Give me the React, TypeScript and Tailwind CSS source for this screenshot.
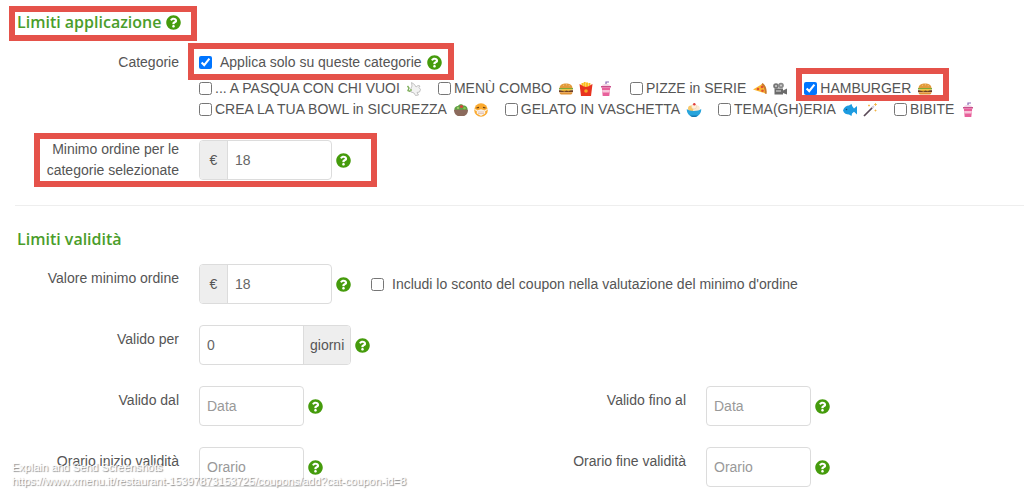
import { ReactNode, useState } from "react";
import { FaQuestionCircle } from "react-icons/fa";

type IconProps = { children: ReactNode; label: string };
const Emoji: React.FC<IconProps> = ({ children, label }) => (
  <svg
    viewBox="0 0 16 16"
    role="img"
    aria-label={label}
    className="w-4 h-4 shrink-0"
  >
    {children}
  </svg>
);

const Dove = () => (
  <Emoji label="dove">
    <path
      d="M4.5 8.5 6 5l-.5-3.500 3 2 1.500 2.500 2-1.500 2 .5-1 1.500 1.500 2-1 2.500-2.500.5 1.500 2.500-3 .5-1.500-2.500L5 11z"
      fill="#f2f2f2"
      stroke="#b5b5b5"
      strokeWidth=".8"
    />
    <path
      d="M1.500 5 3 7 2 9.500l2.500 1"
      fill="none"
      stroke="#7fae5c"
      strokeWidth="1.400"
    />
    <circle cx="5" cy="9" r="1" fill="#8dba6a" />
  </Emoji>
);

const Burger = () => (
  <Emoji label="hamburger">
    <path d="M1.500 7C2 3.500 4.500 2.500 8 2.500s6 1 6.500 4.500z" fill="#e39a3b" />
    <path d="M1 7h14v1.500H1z" fill="#7fa638" />
    <path d="M1.500 8.300h13L12 9.800 9.500 9l-2 1.200L5 9z" fill="#fbc52d" />
    <path d="M1 9.200h14v1.900H1z" fill="#6f3f25" />
    <path d="M2 9.200h11l-2.500 1-2-.6-2 .9z" fill="#fbc52d" />
    <path d="M1.500 11.200h13c0 1.800-1 2.300-2.500 2.300H4c-1.500 0-2.500-.5-2.500-2.300z" fill="#e09334" />
    <path d="M5 4.300h.8M8 3.800h.8M10.800 4.700h.8" stroke="#fbe3b0" strokeWidth=".7" />
  </Emoji>
);

const Fries = () => (
  <Emoji label="french fries">
    <path d="M3.500 2h2v5h-2zM5.700 1h2v6h-2zM8 1.500h2v5.500H8zM10.400 2h2v5h-2z" fill="#fcbf22" />
    <path d="M1.500 3C3.500 3.500 5 6 8 6s4.500-2.500 6.500-3L13 15H3z" fill="#e8331f" />
    <circle cx="8" cy="10" r="1.800" fill="#f9a825" />
  </Emoji>
);

const Shake = () => (
  <Emoji label="cup with straw">
    <path d="M8 5V1h3" fill="none" stroke="#8a6bb5" strokeWidth="1.200" />
    <path d="M4 5c0-1.500 1.500-2 4-2s4 .5 4 2z" fill="#f3d7e6" />
    <path d="M3 5h10v1.500H3z" fill="#c94f8c" />
    <path d="M3.800 6.500h8.400L11.300 15H4.700z" fill="#e8609b" />
    <path d="M4.100 9h7.800l-.3 2.500H4.400z" fill="#f8c5da" />
  </Emoji>
);

const Pizza = () => (
  <Emoji label="pizza">
    <path d="M1 8.500 11 2.500c2.500 2.500 3.500 6 3 10z" fill="#fbb934" />
    <path d="M10.500 2c3 2 4.800 6 4 11l-1.700-.5c.3-3.500-.8-6.500-3.300-9z" fill="#c97a30" />
    <circle cx="6" cy="8" r="1.300" fill="#e2502f" />
    <circle cx="10" cy="6" r="1.300" fill="#e2502f" />
    <circle cx="10.500" cy="9.700" r="1.300" fill="#e2502f" />
  </Emoji>
);

const Camera = () => (
  <Emoji label="movie camera">
    <circle cx="4" cy="5" r="2.800" fill="#777" />
    <circle cx="9" cy="4.500" r="2.800" fill="#8a8a8a" />
    <path d="M2.500 7.500h8.500v6H2.500zM11 9.500l4-2v6l-4-1.500z" fill="#6b6b6b" />
    <circle cx="4" cy="5" r="1" fill="#d0d0d0" />
    <circle cx="9" cy="4.500" r="1" fill="#d0d0d0" />
    <path d="M4 9h5v2H4z" fill="#a5a5a5" />
  </Emoji>
);

const Salad = () => (
  <Emoji label="green salad">
    <path d="M1.500 8C1 5 3.500 4 5 4c1-2 4-2.500 5.500-.5C13 3.500 15 5.500 14.500 8z" fill="#5fa046" />
    <circle cx="8.500" cy="4.500" r="1.600" fill="#d8443a" />
    <circle cx="5" cy="6" r="1.200" fill="#9ccc65" />
    <circle cx="11.500" cy="6.300" r="1.200" fill="#8bc34a" />
    <path d="M1 7.700h14c0 4-2.500 6.300-5 6.300H6c-2.500 0-5-2.300-5-6.300z" fill="#8b6a5c" />
  </Emoji>
);

const MaskFace = () => (
  <Emoji label="face with medical mask">
    <circle cx="8" cy="8" r="6.800" fill="#fbaa2f" />
    <path d="M3.500 6 6 5.300M12.500 6 10 5.300" stroke="#6b3f12" strokeWidth="1.200" />
    <path d="M1.500 7.500 4 8.500M14.500 7.500 12 8.500" stroke="#fff" strokeWidth="1" />
    <path d="M3.800 8.500 8 7.300l4.200 1.200v3L8 14l-4.200-2.500z" fill="#f6f1ec" />
    <path d="M5 10h6M5 11.500h6" stroke="#e0a98a" strokeWidth=".6" />
  </Emoji>
);

const Gelato = () => (
  <Emoji label="ice cream">
    <circle cx="5" cy="6.500" r="3" fill="#f7c86c" />
    <circle cx="10.500" cy="6.500" r="3.200" fill="#fbe9d2" />
    <circle cx="8" cy="4.500" r="2.500" fill="#fff0dc" stroke="#ecc9a3" strokeWidth=".5" />
    <circle cx="8.300" cy="2.300" r="1.200" fill="#e23b3b" />
    <path d="M.8 7c2 2.500 12 2.500 14.400 0 .3 4-2.700 8-7.200 8S.5 11 .8 7z" fill="#27a4dc" />
    <path d="M4 13.500h8c-1 1-2.500 1.500-4 1.500s-3-.5-4-1.500z" fill="#1576b0" />
  </Emoji>
);

const Fish = () => (
  <Emoji label="fish">
    <path
      d="M1 8.500C2 5 4.500 3.500 7 3.500L9.500 2l.8 2.300L12 6.500 15 4v8.500l-3-2.700-2 1.700-.5 2.500-2.500-1.500C4.500 12.500 2 11.500 1 8.500z"
      fill="#1c9be0"
    />
    <circle cx="4.500" cy="7.500" r=".8" fill="#174a73" />
  </Emoji>
);

const Wand = () => (
  <Emoji label="magic wand">
    <path d="M2 14 11 5" stroke="#5a4a57" strokeWidth="1.700" />
    <path d="M10 6l2-2" stroke="#d9d0df" strokeWidth="1.800" />
    <path d="M13.500 1v3M12 2.500h3M7 2.500v2M6 3.500h2M13.500 7.500v2M12.500 8.500h2" stroke="#f1b13c" strokeWidth=".8" />
  </Emoji>
);

const categories = [
  { id: "pasqua", name: "... A PASQUA CON CHI VUOI", icons: [Dove] },
  { id: "combo", name: "MENÙ COMBO", icons: [Burger, Fries, Shake] },
  { id: "pizze", name: "PIZZE in SERIE", icons: [Pizza, Camera] },
  { id: "hamburger", name: "HAMBURGER", icons: [Burger], marked: true },
  { id: "bowl", name: "CREA LA TUA BOWL in SICUREZZA", icons: [Salad, MaskFace] },
  { id: "gelato", name: "GELATO IN VASCHETTA", icons: [Gelato] },
  { id: "tema", name: "TEMA(GH)ERIA", icons: [Fish, Wand] },
  { id: "bibite", name: "BIBITE", icons: [Shake] },
];

// red frame drawn over the part that is being explained
const Frame = ({ className }: { className: string }) => (
  <span
    className={`absolute border-[6px] border-[#e5524a] pointer-events-none ${className}`}
  />
);

const Help = () => (
  <button type="button" aria-label="Aiuto" className="shrink-0 text-[#459b0c]">
    <FaQuestionCircle size={15} />
  </button>
);

type FieldProps = {
  id: string;
  label: string;
  value?: string;
  placeholder?: string;
  prefix?: string;
  suffix?: string;
  center?: boolean;
  children?: ReactNode;
};
const Field: React.FC<FieldProps> = ({
  id,
  label,
  value,
  placeholder,
  prefix,
  suffix,
  center,
  children,
}) => {
  return (
    <div className={`flex gap-5 ${center ? "items-center" : "items-start"}`}>
      <label
        htmlFor={id}
        className={`w-[169px] shrink-0 text-right ${center ? "pl-7" : "pt-1"}`}
      >
        {label}
      </label>
      <div className="flex items-center gap-1">
        <div className="flex h-10 rounded border border-[#dcdcdc] overflow-hidden">
          {prefix && (
            <span className="w-7 flex items-center justify-center bg-[#eee] border-r border-[#dcdcdc]">
              {prefix}
            </span>
          )}
          <input
            id={id}
            type="text"
            defaultValue={value}
            placeholder={placeholder}
            className="w-[103px] px-[7px] text-[#666] placeholder:text-[#999] outline-none"
          />
          {suffix && (
            <span className="px-[6px] flex items-center bg-[#eee] border-l border-[#dcdcdc]">
              {suffix}
            </span>
          )}
        </div>
        <Help />
        {children}
      </div>
    </div>
  );
};

const heading =
  "font-['Open_Sans',sans-serif] text-base leading-6 font-semibold text-[#4a9d2a]";

const App: React.FC = () => {
  const [selected, setSelected] = useState<string[]>(["hamburger"]);

  const toggle = (id: string) => {
    setSelected((prev) =>
      prev.includes(id) ? prev.filter((el) => el !== id) : [...prev, id]
    );
  };

  return (
    <main className="relative bg-white pl-[10px] pt-[10px] pb-[13px] font-['Liberation_Sans',Arial,sans-serif] text-sm leading-[21px] text-[#555]">
      <div className="relative w-fit ml-[7px] flex items-center gap-[5px]">
        <h2 className={heading}>Limiti applicazione</h2>
        <Help />
        <Frame className="-left-2 -right-4 -top-1 -bottom-[7px]" />
      </div>

      <div className="flex gap-5 mt-[18px]">
        <span className="w-[169px] shrink-0 text-right">Categorie</span>
        <div>
          <div className="relative w-fit flex items-center gap-[5px]">
            <label className="flex items-center gap-2">
              <input type="checkbox" defaultChecked className="w-[13px] h-[13px]" />
              Applica solo su queste categorie
            </label>
            <Help />
            <Frame className="-left-[11px] -right-3 -top-[9px] -bottom-[7px]" />
          </div>
          <div className="mt-[5px] flex flex-wrap gap-x-4">
            {categories.map(({ id, name, icons, marked }) => (
              <label key={id} className="relative flex items-center gap-[3px]">
                <input
                  type="checkbox"
                  checked={selected.includes(id)}
                  onChange={() => toggle(id)}
                  className="w-[13px] h-[13px]"
                />
                <span>{name}</span>
                <span className="ml-[3px] flex gap-1">
                  {icons.map((Icon, i) => (
                    <Icon key={i} />
                  ))}
                </span>
                {marked && (
                  <Frame className="-left-2 -right-4 -top-[10px] -bottom-[2px]" />
                )}
              </label>
            ))}
          </div>
        </div>
      </div>

      <div className="relative w-fit mt-[19px]">
        <Field
          id="minimo-categorie"
          label="Minimo ordine per le categorie selezionate"
          prefix="€"
          value="18"
          center
        />
        <Frame className="left-6 -right-[26px] -top-[6px] -bottom-[6px]" />
      </div>

      <hr className="ml-[5px] mt-6 border-[#eee]" />

      <h2 className={`ml-[7px] mt-[21px] ${heading}`}>Limiti validità</h2>

      <div className="mt-[13px] flex flex-col gap-[21px]">
        <Field id="valore-minimo" label="Valore minimo ordine" prefix="€" value="18">
          <label className="ml-4 flex items-center gap-2">
            <input type="checkbox" className="w-[13px] h-[13px]" />
            Includi lo sconto del coupon nella valutazione del minimo d'ordine
          </label>
        </Field>
        <Field id="valido-per" label="Valido per" value="0" suffix="giorni" />
        <div className="grid grid-cols-2 gap-y-[21px]">
          <Field id="valido-dal" label="Valido dal" placeholder="Data" />
          <Field id="valido-al" label="Valido fino al" placeholder="Data" />
          <Field id="orario-inizio" label="Orario inizio validità" placeholder="Orario" />
          <Field id="orario-fine" label="Orario fine validità" placeholder="Orario" />
        </div>
      </div>

      <p className="absolute left-3 bottom-3 text-[11px] leading-[14px] text-white [text-shadow:1px_1px_1px_#888] pointer-events-none">
        Explain and Send Screenshots
        <br />
        https://www.xmenu.it/restaurant-15397873153725/coupons/add?cat-coupon-id=8
      </p>
    </main>
  );
};

export default App;
